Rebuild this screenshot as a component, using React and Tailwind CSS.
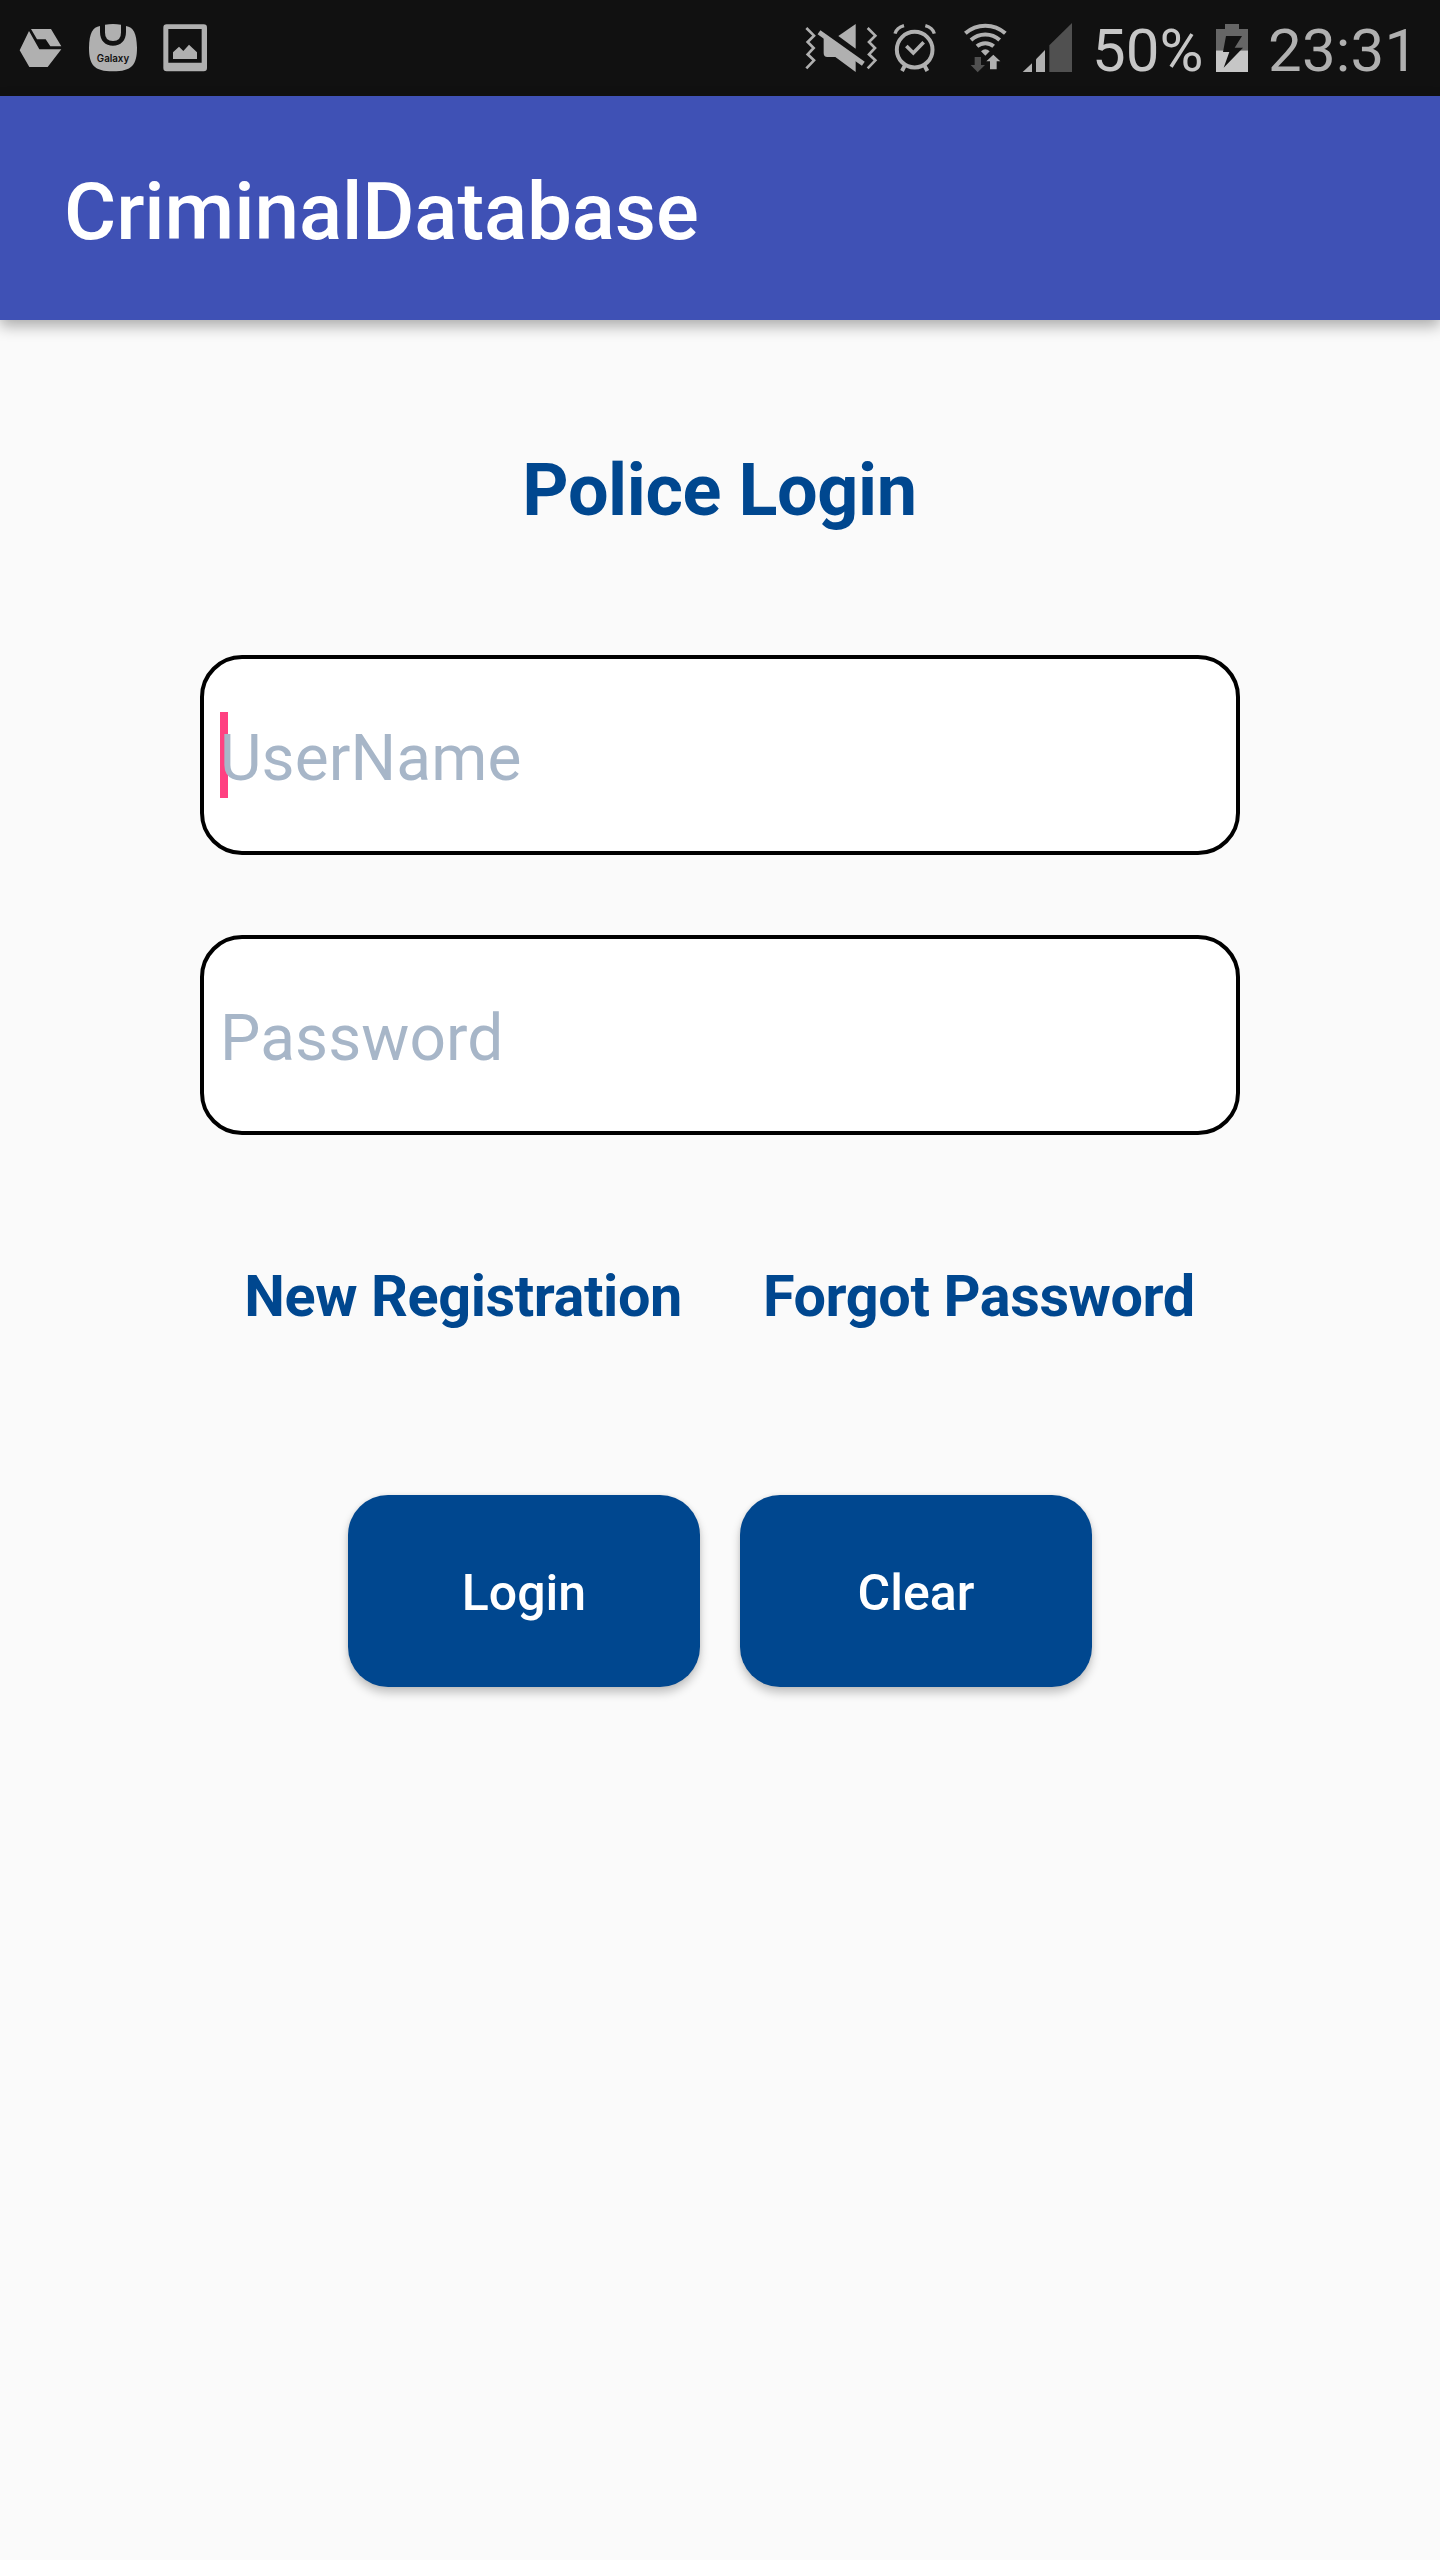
function StatusIcon({ viewBox, className, children }) {
  return (
    <svg viewBox={viewBox} className={`h-24 shrink-0 ${className}`} fill="#b0b0b0" aria-hidden="true">
      {children}
    </svg>
  );
}

function DriveIcon() {
  return (
    <StatusIcon viewBox="48 0 144 288" className="w-12">
      <path d="M87 93 118 148H184L143 201H88L59 151Z" />
      <path d="M93 87H153L184 139H151L137 118H111Z" />
    </StatusIcon>
  );
}

function GalaxyStoreIcon() {
  return (
    <StatusIcon viewBox="264 0 156 288" className="w-13">
      <path d="M300 78V96C300 122 316 137 339 137S378 122 378 96V78C400 81 410 100 411 143C411 194 396 214 339 214S267 194 267 143C268 100 278 81 300 78Z" />
      <path d="M315 74Q339 70 363 74V98Q363 123 339 123T315 98Z" />
      <text x="339" y="185" textAnchor="middle" textLength="97" lengthAdjust="spacingAndGlyphs" fill="#111111" className="font-[Inter] text-[29px] font-semibold">
        Galaxy
      </text>
    </StatusIcon>
  );
}

function GalleryIcon() {
  return (
    <StatusIcon viewBox="480 0 150 288" className="w-[50px]">
      <path fillRule="evenodd" d="M500 73H611Q621 73 621 83V204Q621 214 611 214H500Q490 214 490 204V83Q490 73 500 73ZM505 87V188H605V87Z" />
      <path d="M519 177V157L537 140L550 153L567 134L591 157V177Z" />
    </StatusIcon>
  );
}

function MuteVibrateIcon() {
  return (
    <StatusIcon viewBox="42 0 252 288" className="w-21">
      <g fill="none" stroke="#b0b0b0" strokeWidth="8">
        <path d="M49 84 72 107 53 126 71 144 53 163 72 181 49 205" />
        <path d="M233 84 256 107 237 126 255 144 237 163 256 181 233 205" />
        <path d="M87 97 220 191" strokeWidth="15" />
      </g>
      <path d="M145 108 197 72V146Z" />
      <path d="M101 106 197 174V216L136 171H112Q101 171 101 159Z" />
    </StatusIcon>
  );
}

function AlarmIcon() {
  return (
    <StatusIcon viewBox="294 0 192 288" className="w-16">
      <g fill="none" stroke="#b0b0b0" strokeWidth="12">
        <circle cx="374" cy="149" r="53.5" />
        <path d="M349 138 370 159 401 127" strokeWidth="11" />
        <path d="M315 101Q320 83 342 77M433 101Q428 83 406 77" strokeWidth="10" />
        <path d="M346 194 336 213M402 194 412 213" />
      </g>
    </StatusIcon>
  );
}

function WifiIcon() {
  return (
    <StatusIcon viewBox="486 0 192 288" className="w-16">
      <g fill="none" stroke="#b0b0b0" strokeWidth="12">
        <path d="M526 100A90 90 0 0 1 646 100" />
        <path d="M543 120A63.5 63.5 0 0 1 629 120" />
        <path d="M561 139A38 38 0 0 1 611 139" />
      </g>
      <path d="M573 154Q586 142 599 154L586 167Z" />
      <path d="M554 171H573V195H585L563 217L542 195H554Z" fill="#505050" />
      <path d="M610 164 631 184H620V208H600V184H589Z" />
    </StatusIcon>
  );
}

function SignalIcon() {
  return (
    <StatusIcon viewBox="678 0 228 288" className="w-[76px]">
      <path d="M698 216 726 190V216Z" />
      <path d="M738 178 765 150V216H738Z" />
      <path d="M778 136 846 69V216H778Z" fill="#505050" />
    </StatusIcon>
  );
}

function BatteryIcon() {
  return (
    <StatusIcon viewBox="372 0 192 288" className="w-16">
      <path d="M435 72H477V87H504V151H408V87H435Z" fill="#666666" />
      <path d="M408 151H504V216H408Z" fill="#c6c6c6" />
      <path d="M438 108H486L464 143H489L431 203L448 156H429Z" fill="#111111" />
    </StatusIcon>
  );
}

function StatusBar() {
  return (
    <div className="flex h-24 justify-between bg-[#111111] pl-4">
      <div className="flex gap-6">
        <DriveIcon />
        <GalaxyStoreIcon />
        <div className="-ml-1">
          <GalleryIcon />
        </div>
      </div>
      <div className="flex pr-[22px] text-[60px] leading-[71px] text-[#b0b0b0]">
        <MuteVibrateIcon />
        <AlarmIcon />
        <WifiIcon />
        <SignalIcon />
        <span className="w-28 pt-[15px] whitespace-nowrap text-[#c6c6c6]">50%</span>
        <BatteryIcon />
        <span className="w-[150px] pt-[15px] tracking-[0.2px] whitespace-nowrap">23:31</span>
      </div>
    </div>
  );
}

function Field({ placeholder, focused }) {
  return (
    <div className="relative h-50 w-[1040px] rounded-[42px] border-4 border-black bg-white px-4 pt-[62px] text-[64px] leading-[75px] tracking-[0.1px] text-[#a7b6c8]">
      {focused && <span className="absolute top-[53px] left-4 h-[86px] w-2 bg-[#ff4081]" />}
      <span className="relative">{placeholder}</span>
    </div>
  );
}

function ActionButton({ children }) {
  return (
    <button
      type="button"
      className="flex h-48 w-88 items-start justify-center rounded-[40px] bg-[#00478f] pt-[69px] text-[50px] leading-[58px] font-medium text-white shadow-[0_6px_10px_rgba(0,0,0,0.22),0_0_4px_rgba(0,0,0,0.08)]"
    >
      {children}
    </button>
  );
}

export default function App() {
  return (
    <div className="flex h-[2560px] w-[1440px] flex-col overflow-hidden bg-[#fafafa] font-[Roboto,sans-serif]">
      <StatusBar />
      <header className="flex h-56 items-center bg-[#3f51b5] px-16 pt-2 shadow-[0_6px_14px_rgba(0,0,0,0.32)]">
        <h1 className="text-[80px] leading-[94px] font-medium tracking-[-0.1px] text-white">CriminalDatabase</h1>
      </header>
      <main className="flex flex-col items-center pt-32 text-[#00478f]">
        <h2 className="pr-px text-[72px] leading-[85px] font-bold tracking-[-0.4px]">Police Login</h2>
        <div className="mt-[122px] flex flex-col gap-20">
          <Field placeholder="UserName" focused />
          <Field placeholder="Password" />
        </div>
        <div className="mt-32 flex gap-[81px] pr-px text-[57.6px] leading-[67px] font-bold tracking-[-0.4px]">
          <a>New Registration</a>
          <a>Forgot Password</a>
        </div>
        <div className="mt-[165px] flex gap-10">
          <ActionButton>Login</ActionButton>
          <ActionButton>Clear</ActionButton>
        </div>
      </main>
    </div>
  );
}
